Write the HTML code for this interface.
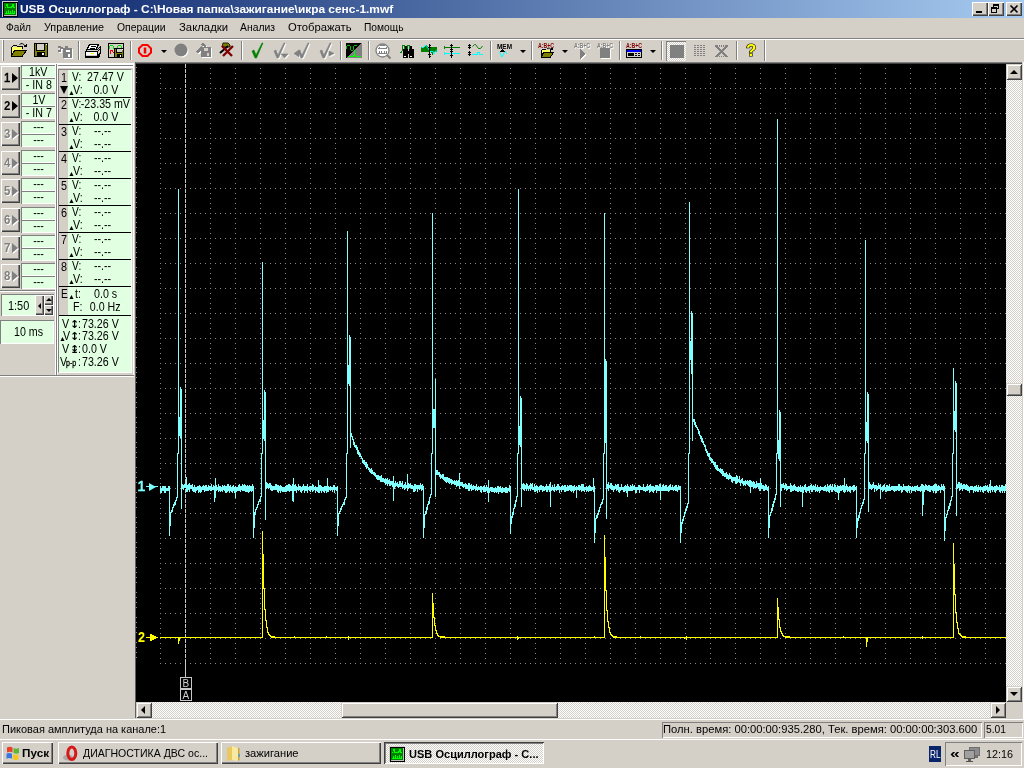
<!DOCTYPE html>
<html><head><meta charset="utf-8"><title>USB Осциллограф</title>
<style>
html,body{margin:0;padding:0}
body{width:1024px;height:768px;position:relative;overflow:hidden;background:#D4D0C8;font-family:"Liberation Sans","DejaVu Sans",sans-serif;font-size:11px;color:#000}
.a{position:absolute;box-sizing:border-box}
.t{position:absolute;white-space:nowrap;transform-origin:0 0}
#w{position:absolute;left:0;top:0;width:1024px;height:768px;will-change:transform}
svg{position:absolute;left:0;top:0;overflow:visible}
.chk{background-image:linear-gradient(45deg,#fff 25%,transparent 25%,transparent 75%,#fff 75%),linear-gradient(45deg,#fff 25%,transparent 25%,transparent 75%,#fff 75%);background-size:2px 2px;background-position:0 0,1px 1px;background-color:#D4D0C8}
</style></head><body><div id="w">

<div class="a" style="left:0px;top:0px;width:1024px;height:18px;background:linear-gradient(90deg,#0A246A 0%,#A6CAF0 100%);"></div>
<svg style="left:2px;top:1px" width="16" height="16" viewBox="0 0 16 16" shape-rendering="crispEdges"><rect x="0" y="0" width="16" height="16" fill="#D4D0C8"/><rect x="1" y="1" width="15" height="15" fill="#000"/><rect x="2" y="2" width="13" height="13" fill="#C0C0C0"/><rect x="2" y="2" width="12" height="12" fill="#008000"/><path d="M2 6h3v-1h-2zM3 5h1v-2h2v3h3v-1h1v-2h2v3h1v1h-2v-1h-1v1h-5v-1h-1v1h-1z" fill="#00FF00"/><path d="M2 13h11v-3h-1v2h-1v-3h-1v3h-1v-2h-1v2h-1v-3h-1v3h-1v-2h-1v2h-1z" fill="#00FF00"/></svg>
<span class="t" style="left:20px;top:3.67px;font-size:11.5px;line-height:11.5px;color:#fff;font-weight:bold;transform:scaleX(1.0353);">USB Осциллограф - C:\Новая папка\зажигание\икра сенс-1.mwf</span>
<div class="a" style="left:972px;top:2px;width:16px;height:14px;background:#D4D0C8;box-shadow:inset 1px 1px 0 #fff, inset -1px -1px 0 #404040, inset -2px -2px 0 #808080;"></div>
<div class="a" style="left:988px;top:2px;width:16px;height:14px;background:#D4D0C8;box-shadow:inset 1px 1px 0 #fff, inset -1px -1px 0 #404040, inset -2px -2px 0 #808080;"></div>
<div class="a" style="left:1006px;top:2px;width:16px;height:14px;background:#D4D0C8;box-shadow:inset 1px 1px 0 #fff, inset -1px -1px 0 #404040, inset -2px -2px 0 #808080;"></div>
<div class="a" style="left:976px;top:11px;width:6px;height:2px;background:#000;"></div>
<div class="a" style="left:993px;top:4px;width:6px;height:5px;border:1px solid #000;border-top:2px solid #000"></div>
<div class="a" style="left:991px;top:7px;width:6px;height:6px;background:#D4D0C8;border:1px solid #000;border-top:2px solid #000"></div>
<svg style="left:1006px;top:2px" width="16" height="14" viewBox="0 0 16 14"><path d="M4.5 3.5l7 7M11.5 3.5l-7 7" stroke="#000" stroke-width="1.6" fill="none"/></svg>
<div class="a" style="left:0px;top:18px;width:1024px;height:20px;background:#D4D0C8;"></div>
<span class="t" style="left:6px;top:21.67px;font-size:11.5px;line-height:11.5px;color:#000;transform:scaleX(0.8845);">Файл</span>
<span class="t" style="left:44px;top:21.67px;font-size:11.5px;line-height:11.5px;color:#000;transform:scaleX(0.9389);">Управление</span>
<span class="t" style="left:116.5px;top:21.67px;font-size:11.5px;line-height:11.5px;color:#000;transform:scaleX(0.9018);">Операции</span>
<span class="t" style="left:178.5px;top:21.67px;font-size:11.5px;line-height:11.5px;color:#000;transform:scaleX(0.9849);">Закладки</span>
<span class="t" style="left:240px;top:21.67px;font-size:11.5px;line-height:11.5px;color:#000;transform:scaleX(0.9021);">Анализ</span>
<span class="t" style="left:287.5px;top:21.67px;font-size:11.5px;line-height:11.5px;color:#000;transform:scaleX(0.9781);">Отображать</span>
<span class="t" style="left:363.5px;top:21.67px;font-size:11.5px;line-height:11.5px;color:#000;transform:scaleX(0.8895);">Помощь</span>
<div class="a" style="left:0px;top:38px;width:1024px;height:1px;background:#808080;"></div>
<div class="a" style="left:0px;top:39px;width:1024px;height:1px;background:#fff;"></div>
<div class="a" style="left:2px;top:40px;width:1px;height:21px;background:#fff;"></div>
<div class="a" style="left:3px;top:40px;width:1px;height:21px;background:#808080;"></div>
<div class="a" style="left:78px;top:41px;width:1px;height:19px;background:#808080;"></div><div class="a" style="left:79px;top:41px;width:1px;height:19px;background:#fff;"></div>
<div class="a" style="left:130px;top:41px;width:1px;height:19px;background:#808080;"></div><div class="a" style="left:131px;top:41px;width:1px;height:19px;background:#fff;"></div>
<div class="a" style="left:241px;top:41px;width:1px;height:19px;background:#808080;"></div><div class="a" style="left:242px;top:41px;width:1px;height:19px;background:#fff;"></div>
<div class="a" style="left:340px;top:41px;width:1px;height:19px;background:#808080;"></div><div class="a" style="left:341px;top:41px;width:1px;height:19px;background:#fff;"></div>
<div class="a" style="left:368px;top:41px;width:1px;height:19px;background:#808080;"></div><div class="a" style="left:369px;top:41px;width:1px;height:19px;background:#fff;"></div>
<div class="a" style="left:490px;top:41px;width:1px;height:19px;background:#808080;"></div><div class="a" style="left:491px;top:41px;width:1px;height:19px;background:#fff;"></div>
<div class="a" style="left:531px;top:41px;width:1px;height:19px;background:#808080;"></div><div class="a" style="left:532px;top:41px;width:1px;height:19px;background:#fff;"></div>
<div class="a" style="left:619px;top:41px;width:1px;height:19px;background:#808080;"></div><div class="a" style="left:620px;top:41px;width:1px;height:19px;background:#fff;"></div>
<div class="a" style="left:661px;top:41px;width:1px;height:19px;background:#808080;"></div><div class="a" style="left:662px;top:41px;width:1px;height:19px;background:#fff;"></div>
<div class="a" style="left:736px;top:41px;width:1px;height:19px;background:#808080;"></div><div class="a" style="left:737px;top:41px;width:1px;height:19px;background:#fff;"></div>
<div class="a" style="left:764px;top:40px;width:1px;height:21px;background:#808080;"></div>
<div class="a" style="left:765px;top:40px;width:1px;height:21px;background:#fff;"></div>
<div class="a" style="left:161px;top:50px;border-top:3px solid #000;border-left:3px solid transparent;border-right:3px solid transparent"></div>
<div class="a" style="left:520px;top:50px;border-top:3px solid #000;border-left:3px solid transparent;border-right:3px solid transparent"></div>
<div class="a" style="left:562px;top:50px;border-top:3px solid #000;border-left:3px solid transparent;border-right:3px solid transparent"></div>
<div class="a" style="left:650px;top:50px;border-top:3px solid #000;border-left:3px solid transparent;border-right:3px solid transparent"></div>
<div class="a chk" style="left:666px;top:41px;width:20px;height:20px;"></div><div class="a" style="left:666px;top:41px;width:20px;height:1px;background:#808080;"></div><div class="a" style="left:666px;top:41px;width:1px;height:20px;background:#808080;"></div><svg width="1024" height="64" viewBox="0 0 1024 64" shape-rendering="crispEdges"><g transform="translate(11 43)"><path d="M0.5 3.5h1l1-1h3l1 1h5v2.5M0.5 3.5v9.5" stroke="#000" fill="none"/><path d="M1 4h10v4H3l-2 4z" fill="#FFFF66"/><path d="M3.5 7.5h12l-4 5.5h-11z" fill="#808000" stroke="#000"/><path d="M8.5 1.5q3-2.5 5.5 1.5" stroke="#000" fill="none" shape-rendering="auto"/><path d="M12 4h4v-3z" fill="#000"/></g><g transform="translate(34 43)"><rect x="0" y="0" width="14" height="14" fill="#000"/><rect x="1" y="1" width="12" height="12" fill="#808000"/><rect x="3" y="1" width="8" height="6" fill="#D4D0C8"/><rect x="10" y="1" width="1" height="6" fill="#000"/><rect x="2" y="1" width="1" height="6" fill="#000"/><rect x="2" y="7" width="9" height="1" fill="#000"/><rect x="3" y="9" width="8" height="4" fill="#000"/><rect x="8" y="10" width="2" height="2" fill="#fff"/><rect x="12" y="1" width="1" height="1" fill="#fff"/></g><g transform="translate(58 46)"><g transform="translate(1 1)" fill="#fff"><rect x="5" y="2" width="9" height="10"/><path d="M0 0h3v1h2v2h-2v3h-3v-2h2v-2h-2z"/></g><g fill="#808080"><rect x="5" y="2" width="9" height="10"/><path d="M0 0h3v1h2v2h-2v3h-3v-2h2v-2h-2zM7 0h3v2h-3z"/></g><rect x="8" y="4" width="4" height="2" fill="#fff"/><rect x="10" y="8" width="2" height="3" fill="#fff"/></g><g transform="translate(85 44)"><path d="M4.5 0.5h9l-2.5 5h-9z" fill="#fff" stroke="#000"/><path d="M6 2.5h5M5 4h5" stroke="#000"/><path d="M0.5 7.5l2-2h10l3 -2.5v6l-3 3h-12z" fill="#D4D0C8" stroke="#000"/><rect x="1" y="8" width="11" height="3" fill="#fff"/><path d="M0.500 7.5h12v5.500h-12zM12.5 7.5l3-3" stroke="#000" fill="none"/><rect x="6" y="9" width="3" height="1" fill="#FFFF00"/><path d="M2 13.500h11l2-2" stroke="#000" fill="none"/></g><g transform="translate(108 43)"><rect x="0.500" y="0.500" width="15" height="14" fill="#D4D0C8" stroke="#000"/><path d="M1.500 5.500v-2l1-1h2l1 1v2M9.500 4.500v-1l1-1h2l1 1v2" stroke="#00E000" fill="none"/><path d="M1.500 10.500h1v-3h2l1 3" stroke="#FF0000" fill="none"/><g transform="translate(6 5)"><rect x="0" y="0" width="10" height="10" fill="#000"/><rect x="1" y="1" width="8" height="8" fill="#808000"/><rect x="3" y="1" width="5" height="3" fill="#D4D0C8"/><rect x="2" y="1" width="1" height="3" fill="#000"/><rect x="2" y="4" width="6" height="1" fill="#000"/><rect x="3" y="6" width="5" height="4" fill="#000"/><rect x="6" y="7" width="1" height="2" fill="#fff"/><rect x="8" y="1" width="1" height="1" fill="#fff"/></g></g><g transform="translate(138 44)"><path d="M4.500 1h5l3.500 3.500v4l-3.500 3.500h-5l-3.500-3.500v-4z" fill="none" stroke="#FF0000" stroke-width="2" shape-rendering="auto"/><rect x="5.750" y="3.500" width="2.500" height="6" fill="#FF0000" shape-rendering="auto"/></g><g transform="translate(174 43)"><circle cx="8" cy="8" r="6.500" fill="#fff" shape-rendering="auto"/><circle cx="7" cy="7" r="6.500" fill="#808080" shape-rendering="auto"/></g><g transform="translate(196 43)"><g fill="#fff" transform="translate(1 1)"><rect x="5" y="4" width="10" height="10"/><path d="M0 9l5-6 2 2-5 6zM4 1l3-1 4 3-2 1z"/></g><g fill="#808080"><rect x="5" y="4" width="10" height="10"/><path d="M0 9l5-6 2 2-5 6zM4 1l3-1 4 3-2 1z"/></g><rect x="8" y="5" width="4" height="3" fill="#D4D0C8"/><rect x="11" y="10" width="2" height="3" fill="#D4D0C8"/></g><g transform="translate(219 42)"><path d="M4 1h5l2 2v2h-8z" fill="#808000" stroke="#000" stroke-width="0.800" shape-rendering="auto"/><path d="M1 11l8-7" stroke="#000" stroke-width="2" shape-rendering="auto"/><path d="M3 4l10 10M14 4l-10 10" stroke="#800000" stroke-width="2.400" shape-rendering="auto"/></g><g transform="translate(251 43)"><g fill="#008000" stroke="#008000" stroke-width="0.6" shape-rendering="auto"><path d="M1 8l2-1 2 5 6-12h1l-6.500 15h-1.500z"/></g></g><g transform="translate(273 43)"><g transform="translate(1 1)" fill="#fff" stroke="#fff" stroke-width="0.6" shape-rendering="auto"><path d="M1 8l2-1 2 5 6-12h1l-6.500 15h-1.500z"/><path d="M8 11h7l-3.500 4z"/></g><g fill="#808080" stroke="#808080" stroke-width="0.6" shape-rendering="auto"><path d="M1 8l2-1 2 5 6-12h1l-6.500 15h-1.500z"/><path d="M8 11h7l-3.500 4z"/></g></g><g transform="translate(297 43)"><g transform="translate(1 1)" fill="#fff" stroke="#fff" stroke-width="0.6" shape-rendering="auto"><path d="M1 8l2-1 2 5 6-12h1l-6.500 15h-1.500z"/><path d="M-3 10.500l5-3.500v7z"/></g><g fill="#808080" stroke="#808080" stroke-width="0.6" shape-rendering="auto"><path d="M1 8l2-1 2 5 6-12h1l-6.500 15h-1.500z"/><path d="M-3 10.500l5-3.500v7z"/></g></g><g transform="translate(319 43)"><g transform="translate(1 1)" fill="#fff" stroke="#fff" stroke-width="0.6" shape-rendering="auto"><path d="M1 8l2-1 2 5 6-12h1l-6.500 15h-1.500z"/><path d="M10 8l5 2.500-5 2.500z"/></g><g fill="#808080" stroke="#808080" stroke-width="0.6" shape-rendering="auto"><path d="M1 8l2-1 2 5 6-12h1l-6.500 15h-1.500z"/><path d="M10 8l5 2.500-5 2.500z"/></g></g><g transform="translate(346 43)"><rect x="0" y="0" width="16" height="15" fill="#808080"/><path d="M0 0h16l-16 15z" fill="#000"/><path d="M0.500 5.500v-2l1-1h2l1 1v3l1 1h1l1-1v-3l1.500-1h2" stroke="#00C000" fill="none"/><path d="M2 13.500h5l1.500-1.500v-5M8.500 12l1.500 1.500h5" stroke="#00FF00" fill="none"/></g><g transform="translate(375 43)"><circle cx="7.500" cy="7.500" r="6.500" fill="#fff" stroke="#808080" stroke-width="1.300" shape-rendering="auto"/><path d="M3 5.500h9M4 4.500v-1M11 4.500v-1M3 10.500h9M4 10.500v-3M6.500 10.500v-3M9 10.500v-3M11.500 10.500v-3M5 2.500h5" stroke="#808080" fill="none"/><path d="M12 12l3.500 3.500" stroke="#808080" stroke-width="2" shape-rendering="auto"/></g><g transform="translate(399 43)"><path d="M0.500 9.500h2l1-3v-4h2v3l1.500 1h1v-4h2v3" stroke="#008000" fill="none"/><path d="M0 10h3v-2z" fill="#008000"/><rect x="4" y="6" width="5" height="9" fill="#000"/><rect x="10" y="6" width="5" height="9" fill="#000"/><rect x="6" y="3" width="2" height="4" fill="#000"/><rect x="11" y="3" width="2" height="4" fill="#000"/><rect x="8" y="8" width="3" height="3" fill="#000"/><rect x="5" y="13" width="2" height="1" fill="#fff"/><rect x="11" y="13" width="2" height="1" fill="#fff"/></g><g transform="translate(421 44)"><path d="M0 3h3l2-2 2 2h9v5h-3l-1.500 3-1.500-3h-10z" fill="#008000"/><path d="M0.500 3.500h2l2-2.500 2 2 2.500 4.500h3l1 2.500 1.500-3h2" stroke="#00FFFF" fill="none" shape-rendering="auto"/><path d="M8.500 0v14M7 3.500h3M7 10.500h3M7.500 1.500h2M7.500 12.500h2" stroke="#000" fill="none"/></g><g transform="translate(444 44)"><path d="M0 3.500h16" stroke="#008000"/><path d="M0 2v3l3-1.500z" fill="#008000"/><path d="M0 9.500h16" stroke="#00FFFF"/><path d="M0 8v3l3-1.500z" fill="#00FFFF"/><path d="M7.500 0v14M6 1.500h3M6 5.500h3M6 7.500h3M6 11.500h3" stroke="#000" fill="none"/></g><g transform="translate(468 43)"><path d="M1.500 1v5M1.500 8v5M0 2.500h3M0 4.500h3M0 9.500h3M0 11.500h3" stroke="#000" fill="none"/><path d="M4.500 3.500l2-2h1l3 4h2l2-2.500" stroke="#008000" fill="none" shape-rendering="auto"/><path d="M4 11.500h5v-2.500h2v2.500h4" stroke="#00FFFF" fill="none"/></g><g transform="translate(497 43)"><text x="0" y="5.500" font-family="Liberation Sans,sans-serif" font-size="6.500" font-weight="bold" fill="#000" textLength="15" lengthAdjust="spacingAndGlyphs">MEM</text><path d="M2.500 9l2.500 5 3-6 2 3" stroke="#00FFFF" fill="none" shape-rendering="auto"/><path d="M3 8.500h5l-2.500-2.500z" fill="#000"/></g><g transform="translate(538 43)"><text x="0" y="4.800" font-family="Liberation Sans,sans-serif" font-size="6.500" font-weight="bold" fill="#800000" textLength="16" lengthAdjust="spacingAndGlyphs">A:B+C</text><g transform="translate(3 5)"><path d="M0.500 1.500h4l1 1h4v2M0.500 1.500v7" stroke="#000" fill="none"/><path d="M1 2h8v3H2l-1 3z" fill="#FFFF66"/><path d="M2.500 4.500h10l-3 4.500h-9z" fill="#808000" stroke="#000"/><path d="M6 0.500q2.500-1.500 4 1" stroke="#000" fill="none" shape-rendering="auto"/><path d="M8.500 2h3v-2.500z" fill="#000"/></g></g><g transform="translate(574 43)"><text x="1" y="5.800" font-family="Liberation Sans,sans-serif" font-size="6.500" font-weight="bold" fill="#fff" textLength="16" lengthAdjust="spacingAndGlyphs">A:B+C</text><text x="0" y="4.800" font-family="Liberation Sans,sans-serif" font-size="6.500" font-weight="bold" fill="#808080" textLength="16" lengthAdjust="spacingAndGlyphs">A:B+C</text><path d="M7 7l6 5-6 5z" fill="#fff"/><path d="M6 6l6 5-6 5z" fill="#808080"/></g><g transform="translate(597 43)"><text x="1" y="5.800" font-family="Liberation Sans,sans-serif" font-size="6.500" font-weight="bold" fill="#fff" textLength="16" lengthAdjust="spacingAndGlyphs">A:B+C</text><text x="0" y="4.800" font-family="Liberation Sans,sans-serif" font-size="6.500" font-weight="bold" fill="#808080" textLength="16" lengthAdjust="spacingAndGlyphs">A:B+C</text><rect x="4" y="6" width="10" height="10" fill="#fff"/><rect x="3" y="5" width="10" height="10" fill="#808080"/></g><g transform="translate(626 43)"><text x="0" y="4.800" font-family="Liberation Sans,sans-serif" font-size="6.500" font-weight="bold" fill="#800000" textLength="16" lengthAdjust="spacingAndGlyphs">A:B+C</text><rect x="0.500" y="6.500" width="15" height="8" fill="#D4D0C8" stroke="#000"/><rect x="1" y="7" width="14" height="2" fill="#0000FF"/><rect x="2" y="10" width="6" height="3" fill="#000"/><path d="M9 10.500h2M12 10.500h2M9 12.500h2M12 12.500h2" stroke="#000"/></g><g transform="translate(670 45)"><rect x="0" y="0" width="14" height="13" fill="#808080"/></g><g transform="translate(694 45)"><path d="M0 0.5h11M0 2.5h11M0 4.5h11M0 6.5h11M0 8.5h11M0 10.5h11" stroke="#808080" stroke-dasharray="2 1"/></g><g transform="translate(715 45)"><path d="M0 0h13M0 1.500h13" stroke="#808080" stroke-dasharray="1 1"/><path d="M1 1l11 11M12 1l-11 11" stroke="#808080" stroke-width="2.500"/><path d="M0 11.500h13" stroke="#808080" stroke-dasharray="1 1"/></g><g transform="translate(746 43)"><text x="0" y="13" font-family="Liberation Sans,sans-serif" font-size="17" font-weight="bold" fill="#FFFF00" stroke="#000" stroke-width="1.200" paint-order="stroke" shape-rendering="auto">?</text></g></svg>
<div class="a" style="left:0px;top:63px;width:134px;height:2px;background:#fff;"></div>
<div class="a" style="left:133px;top:63px;width:1px;height:313px;background:#fff;"></div>
<div class="a" style="left:1px;top:66px;width:19px;height:24px;background:#D4D0C8;box-shadow:inset 1px 1px 0 #fff, inset -1px -1px 0 #404040, inset -2px -2px 0 #808080;"></div>
<span class="t" style="left:4px;top:72.34px;font-size:12px;line-height:12px;color:#000;transform:scaleX(0.95);-webkit-text-stroke:0.6px #000;">1</span>
<div class="a" style="left:12px;top:73px;border-left:6px solid #000;border-top:5px solid transparent;border-bottom:5px solid transparent"></div>
<div class="a" style="left:21px;top:65px;width:35px;height:13px;background:#E1FFE1;box-shadow:inset 1px 1px 0 #808080, inset -1px -1px 0 #fff;"></div>
<div class="a" style="left:21px;top:78px;width:35px;height:13px;background:#E1FFE1;box-shadow:inset 1px 1px 0 #808080, inset -1px -1px 0 #fff;"></div>
<span class="a" style="left:22px;top:65.00px;width:33px;text-align:center;white-space:nowrap;font-size:13px;line-height:13px;color:#000;"><span style="display:inline-block;transform:scaleX(0.82)">1kV</span></span>
<span class="a" style="left:22px;top:77.50px;width:33px;text-align:center;white-space:nowrap;font-size:13px;line-height:13px;color:#000;"><span style="display:inline-block;transform:scaleX(0.82)">- IN 8</span></span>
<div class="a" style="left:1px;top:94px;width:19px;height:24px;background:#D4D0C8;box-shadow:inset 1px 1px 0 #fff, inset -1px -1px 0 #404040, inset -2px -2px 0 #808080;"></div>
<span class="t" style="left:4px;top:100.34px;font-size:12px;line-height:12px;color:#000;font-weight:bold;transform:scaleX(0.95);">2</span>
<div class="a" style="left:12px;top:101px;border-left:6px solid #000;border-top:5px solid transparent;border-bottom:5px solid transparent"></div>
<div class="a" style="left:21px;top:93px;width:35px;height:13px;background:#E1FFE1;box-shadow:inset 1px 1px 0 #808080, inset -1px -1px 0 #fff;"></div>
<div class="a" style="left:21px;top:106px;width:35px;height:13px;background:#E1FFE1;box-shadow:inset 1px 1px 0 #808080, inset -1px -1px 0 #fff;"></div>
<span class="a" style="left:22px;top:93.00px;width:33px;text-align:center;white-space:nowrap;font-size:13px;line-height:13px;color:#000;"><span style="display:inline-block;transform:scaleX(0.82)">1V</span></span>
<span class="a" style="left:22px;top:105.50px;width:33px;text-align:center;white-space:nowrap;font-size:13px;line-height:13px;color:#000;"><span style="display:inline-block;transform:scaleX(0.82)">- IN 7</span></span>
<div class="a" style="left:1px;top:122px;width:19px;height:24px;background:#D4D0C8;box-shadow:inset 1px 1px 0 #fff, inset -1px -1px 0 #404040, inset -2px -2px 0 #808080;"></div>
<span class="t" style="left:5px;top:129.34px;font-size:12px;line-height:12px;color:#fff;font-weight:bold;transform:scaleX(0.95);">3</span>
<div class="a" style="left:13px;top:130px;border-left:6px solid #fff;border-top:5px solid transparent;border-bottom:5px solid transparent"></div>
<span class="t" style="left:4px;top:128.34px;font-size:12px;line-height:12px;color:#808080;font-weight:bold;transform:scaleX(0.95);">3</span>
<div class="a" style="left:12px;top:129px;border-left:6px solid #808080;border-top:5px solid transparent;border-bottom:5px solid transparent"></div>
<div class="a" style="left:21px;top:121px;width:35px;height:13px;background:#E1FFE1;box-shadow:inset 1px 1px 0 #808080, inset -1px -1px 0 #fff;"></div>
<div class="a" style="left:21px;top:134px;width:35px;height:13px;background:#E1FFE1;box-shadow:inset 1px 1px 0 #808080, inset -1px -1px 0 #fff;"></div>
<span class="a" style="left:22px;top:120.00px;width:33px;text-align:center;white-space:nowrap;font-size:13px;line-height:13px;color:#000;"><span style="display:inline-block;transform:scaleX(0.82)">---</span></span>
<span class="a" style="left:22px;top:132.50px;width:33px;text-align:center;white-space:nowrap;font-size:13px;line-height:13px;color:#000;"><span style="display:inline-block;transform:scaleX(0.82)">---</span></span>
<div class="a" style="left:1px;top:151px;width:19px;height:24px;background:#D4D0C8;box-shadow:inset 1px 1px 0 #fff, inset -1px -1px 0 #404040, inset -2px -2px 0 #808080;"></div>
<span class="t" style="left:5px;top:158.34px;font-size:12px;line-height:12px;color:#fff;font-weight:bold;transform:scaleX(0.95);">4</span>
<div class="a" style="left:13px;top:159px;border-left:6px solid #fff;border-top:5px solid transparent;border-bottom:5px solid transparent"></div>
<span class="t" style="left:4px;top:157.34px;font-size:12px;line-height:12px;color:#808080;font-weight:bold;transform:scaleX(0.95);">4</span>
<div class="a" style="left:12px;top:158px;border-left:6px solid #808080;border-top:5px solid transparent;border-bottom:5px solid transparent"></div>
<div class="a" style="left:21px;top:150px;width:35px;height:13px;background:#E1FFE1;box-shadow:inset 1px 1px 0 #808080, inset -1px -1px 0 #fff;"></div>
<div class="a" style="left:21px;top:163px;width:35px;height:13px;background:#E1FFE1;box-shadow:inset 1px 1px 0 #808080, inset -1px -1px 0 #fff;"></div>
<span class="a" style="left:22px;top:149.00px;width:33px;text-align:center;white-space:nowrap;font-size:13px;line-height:13px;color:#000;"><span style="display:inline-block;transform:scaleX(0.82)">---</span></span>
<span class="a" style="left:22px;top:161.50px;width:33px;text-align:center;white-space:nowrap;font-size:13px;line-height:13px;color:#000;"><span style="display:inline-block;transform:scaleX(0.82)">---</span></span>
<div class="a" style="left:1px;top:179px;width:19px;height:24px;background:#D4D0C8;box-shadow:inset 1px 1px 0 #fff, inset -1px -1px 0 #404040, inset -2px -2px 0 #808080;"></div>
<span class="t" style="left:5px;top:186.34px;font-size:12px;line-height:12px;color:#fff;font-weight:bold;transform:scaleX(0.95);">5</span>
<div class="a" style="left:13px;top:187px;border-left:6px solid #fff;border-top:5px solid transparent;border-bottom:5px solid transparent"></div>
<span class="t" style="left:4px;top:185.34px;font-size:12px;line-height:12px;color:#808080;font-weight:bold;transform:scaleX(0.95);">5</span>
<div class="a" style="left:12px;top:186px;border-left:6px solid #808080;border-top:5px solid transparent;border-bottom:5px solid transparent"></div>
<div class="a" style="left:21px;top:178px;width:35px;height:13px;background:#E1FFE1;box-shadow:inset 1px 1px 0 #808080, inset -1px -1px 0 #fff;"></div>
<div class="a" style="left:21px;top:191px;width:35px;height:13px;background:#E1FFE1;box-shadow:inset 1px 1px 0 #808080, inset -1px -1px 0 #fff;"></div>
<span class="a" style="left:22px;top:177.00px;width:33px;text-align:center;white-space:nowrap;font-size:13px;line-height:13px;color:#000;"><span style="display:inline-block;transform:scaleX(0.82)">---</span></span>
<span class="a" style="left:22px;top:189.50px;width:33px;text-align:center;white-space:nowrap;font-size:13px;line-height:13px;color:#000;"><span style="display:inline-block;transform:scaleX(0.82)">---</span></span>
<div class="a" style="left:1px;top:208px;width:19px;height:24px;background:#D4D0C8;box-shadow:inset 1px 1px 0 #fff, inset -1px -1px 0 #404040, inset -2px -2px 0 #808080;"></div>
<span class="t" style="left:5px;top:215.34px;font-size:12px;line-height:12px;color:#fff;font-weight:bold;transform:scaleX(0.95);">6</span>
<div class="a" style="left:13px;top:216px;border-left:6px solid #fff;border-top:5px solid transparent;border-bottom:5px solid transparent"></div>
<span class="t" style="left:4px;top:214.34px;font-size:12px;line-height:12px;color:#808080;font-weight:bold;transform:scaleX(0.95);">6</span>
<div class="a" style="left:12px;top:215px;border-left:6px solid #808080;border-top:5px solid transparent;border-bottom:5px solid transparent"></div>
<div class="a" style="left:21px;top:207px;width:35px;height:13px;background:#E1FFE1;box-shadow:inset 1px 1px 0 #808080, inset -1px -1px 0 #fff;"></div>
<div class="a" style="left:21px;top:220px;width:35px;height:13px;background:#E1FFE1;box-shadow:inset 1px 1px 0 #808080, inset -1px -1px 0 #fff;"></div>
<span class="a" style="left:22px;top:206.00px;width:33px;text-align:center;white-space:nowrap;font-size:13px;line-height:13px;color:#000;"><span style="display:inline-block;transform:scaleX(0.82)">---</span></span>
<span class="a" style="left:22px;top:218.50px;width:33px;text-align:center;white-space:nowrap;font-size:13px;line-height:13px;color:#000;"><span style="display:inline-block;transform:scaleX(0.82)">---</span></span>
<div class="a" style="left:1px;top:236px;width:19px;height:24px;background:#D4D0C8;box-shadow:inset 1px 1px 0 #fff, inset -1px -1px 0 #404040, inset -2px -2px 0 #808080;"></div>
<span class="t" style="left:5px;top:243.34px;font-size:12px;line-height:12px;color:#fff;font-weight:bold;transform:scaleX(0.95);">7</span>
<div class="a" style="left:13px;top:244px;border-left:6px solid #fff;border-top:5px solid transparent;border-bottom:5px solid transparent"></div>
<span class="t" style="left:4px;top:242.34px;font-size:12px;line-height:12px;color:#808080;font-weight:bold;transform:scaleX(0.95);">7</span>
<div class="a" style="left:12px;top:243px;border-left:6px solid #808080;border-top:5px solid transparent;border-bottom:5px solid transparent"></div>
<div class="a" style="left:21px;top:235px;width:35px;height:13px;background:#E1FFE1;box-shadow:inset 1px 1px 0 #808080, inset -1px -1px 0 #fff;"></div>
<div class="a" style="left:21px;top:248px;width:35px;height:13px;background:#E1FFE1;box-shadow:inset 1px 1px 0 #808080, inset -1px -1px 0 #fff;"></div>
<span class="a" style="left:22px;top:234.00px;width:33px;text-align:center;white-space:nowrap;font-size:13px;line-height:13px;color:#000;"><span style="display:inline-block;transform:scaleX(0.82)">---</span></span>
<span class="a" style="left:22px;top:246.50px;width:33px;text-align:center;white-space:nowrap;font-size:13px;line-height:13px;color:#000;"><span style="display:inline-block;transform:scaleX(0.82)">---</span></span>
<div class="a" style="left:1px;top:264px;width:19px;height:24px;background:#D4D0C8;box-shadow:inset 1px 1px 0 #fff, inset -1px -1px 0 #404040, inset -2px -2px 0 #808080;"></div>
<span class="t" style="left:5px;top:271.34px;font-size:12px;line-height:12px;color:#fff;font-weight:bold;transform:scaleX(0.95);">8</span>
<div class="a" style="left:13px;top:272px;border-left:6px solid #fff;border-top:5px solid transparent;border-bottom:5px solid transparent"></div>
<span class="t" style="left:4px;top:270.34px;font-size:12px;line-height:12px;color:#808080;font-weight:bold;transform:scaleX(0.95);">8</span>
<div class="a" style="left:12px;top:271px;border-left:6px solid #808080;border-top:5px solid transparent;border-bottom:5px solid transparent"></div>
<div class="a" style="left:21px;top:263px;width:35px;height:13px;background:#E1FFE1;box-shadow:inset 1px 1px 0 #808080, inset -1px -1px 0 #fff;"></div>
<div class="a" style="left:21px;top:276px;width:35px;height:13px;background:#E1FFE1;box-shadow:inset 1px 1px 0 #808080, inset -1px -1px 0 #fff;"></div>
<span class="a" style="left:22px;top:262.00px;width:33px;text-align:center;white-space:nowrap;font-size:13px;line-height:13px;color:#000;"><span style="display:inline-block;transform:scaleX(0.82)">---</span></span>
<span class="a" style="left:22px;top:274.50px;width:33px;text-align:center;white-space:nowrap;font-size:13px;line-height:13px;color:#000;"><span style="display:inline-block;transform:scaleX(0.82)">---</span></span>
<div class="a" style="left:55px;top:64px;width:1px;height:312px;background:#fff;"></div>
<div class="a" style="left:56px;top:64px;width:1px;height:312px;background:#808080;"></div>
<div class="a" style="left:57px;top:65px;width:76px;height:1px;background:#808080;"></div>
<div class="a" style="left:57px;top:66px;width:76px;height:2px;background:#fff;"></div>
<div class="a" style="left:57px;top:65px;width:1px;height:310px;background:#fff;"></div>
<div class="a" style="left:58px;top:69px;width:74px;height:304px;background:#E1FFE1;border-top:1px solid #808080;border-left:1px solid #808080;border-right:1px solid #fff;border-bottom:1px solid #fff;"></div>
<div class="a" style="left:59px;top:70px;width:9px;height:245px;background:#D4D0C8;"></div>
<div class="a" style="left:59px;top:97px;width:72px;height:1px;background:#000;"></div>
<div class="a" style="left:59px;top:124px;width:72px;height:1px;background:#000;"></div>
<div class="a" style="left:59px;top:151px;width:72px;height:1px;background:#000;"></div>
<div class="a" style="left:59px;top:178px;width:72px;height:1px;background:#000;"></div>
<div class="a" style="left:59px;top:205px;width:72px;height:1px;background:#000;"></div>
<div class="a" style="left:59px;top:232px;width:72px;height:1px;background:#000;"></div>
<div class="a" style="left:59px;top:259px;width:72px;height:1px;background:#000;"></div>
<div class="a" style="left:59px;top:286px;width:72px;height:1px;background:#000;"></div>
<div class="a" style="left:59px;top:315px;width:72px;height:1px;background:#000;"></div>
<span class="t" style="left:60.5px;top:72.44px;font-size:12px;line-height:12px;color:#000;transform:scaleX(0.9);">1</span>
<span class="t" style="left:71.8px;top:69.50px;font-size:13px;line-height:13px;color:#000;transform:scaleX(0.78);">V:</span>
<span class="t" style="left:73px;top:82.80px;font-size:13px;line-height:13px;color:#000;transform:scaleX(0.82);">V:</span>
<span class="t" style="left:68px;top:88.57px;font-size:7px;line-height:7px;color:#000;">▲</span>
<span class="a" style="left:24px;top:69.50px;width:100px;text-align:right;white-space:nowrap;font-size:13px;line-height:13px;color:#000;"><span style="display:inline-block;transform:scaleX(0.82);transform-origin:100% 0">27.47 V</span></span>
<span class="a" style="left:18px;top:82.80px;width:100px;text-align:right;white-space:nowrap;font-size:13px;line-height:13px;color:#000;"><span style="display:inline-block;transform:scaleX(0.82);transform-origin:100% 0">0.0 V</span></span>
<span class="t" style="left:60.5px;top:99.44px;font-size:12px;line-height:12px;color:#000;transform:scaleX(0.9);">2</span>
<span class="t" style="left:71.8px;top:96.50px;font-size:13px;line-height:13px;color:#000;transform:scaleX(0.78);">V:</span>
<span class="t" style="left:73px;top:109.80px;font-size:13px;line-height:13px;color:#000;transform:scaleX(0.82);">V:</span>
<span class="t" style="left:68px;top:115.57px;font-size:7px;line-height:7px;color:#000;">▲</span>
<span class="a" style="left:30px;top:96.50px;width:100px;text-align:right;white-space:nowrap;font-size:13px;line-height:13px;color:#000;"><span style="display:inline-block;transform:scaleX(0.82);transform-origin:100% 0">-23.35 mV</span></span>
<span class="a" style="left:18px;top:109.80px;width:100px;text-align:right;white-space:nowrap;font-size:13px;line-height:13px;color:#000;"><span style="display:inline-block;transform:scaleX(0.82);transform-origin:100% 0">0.0 V</span></span>
<span class="t" style="left:60.5px;top:126.44px;font-size:12px;line-height:12px;color:#000;transform:scaleX(0.9);">3</span>
<span class="t" style="left:71.8px;top:123.50px;font-size:13px;line-height:13px;color:#000;transform:scaleX(0.78);">V:</span>
<span class="t" style="left:73px;top:136.80px;font-size:13px;line-height:13px;color:#000;transform:scaleX(0.82);">V:</span>
<span class="t" style="left:68px;top:142.57px;font-size:7px;line-height:7px;color:#000;">▲</span>
<span class="a" style="left:92px;top:123.50px;width:20px;text-align:center;white-space:nowrap;font-size:13px;line-height:13px;color:#000;"><span style="display:inline-block;transform:scaleX(0.82)">--.--</span></span>
<span class="a" style="left:92px;top:136.80px;width:20px;text-align:center;white-space:nowrap;font-size:13px;line-height:13px;color:#000;"><span style="display:inline-block;transform:scaleX(0.82)">--.--</span></span>
<span class="t" style="left:60.5px;top:153.44px;font-size:12px;line-height:12px;color:#000;transform:scaleX(0.9);">4</span>
<span class="t" style="left:71.8px;top:150.50px;font-size:13px;line-height:13px;color:#000;transform:scaleX(0.78);">V:</span>
<span class="t" style="left:73px;top:163.80px;font-size:13px;line-height:13px;color:#000;transform:scaleX(0.82);">V:</span>
<span class="t" style="left:68px;top:169.57px;font-size:7px;line-height:7px;color:#000;">▲</span>
<span class="a" style="left:92px;top:150.50px;width:20px;text-align:center;white-space:nowrap;font-size:13px;line-height:13px;color:#000;"><span style="display:inline-block;transform:scaleX(0.82)">--.--</span></span>
<span class="a" style="left:92px;top:163.80px;width:20px;text-align:center;white-space:nowrap;font-size:13px;line-height:13px;color:#000;"><span style="display:inline-block;transform:scaleX(0.82)">--.--</span></span>
<span class="t" style="left:60.5px;top:180.44px;font-size:12px;line-height:12px;color:#000;transform:scaleX(0.9);">5</span>
<span class="t" style="left:71.8px;top:177.50px;font-size:13px;line-height:13px;color:#000;transform:scaleX(0.78);">V:</span>
<span class="t" style="left:73px;top:190.80px;font-size:13px;line-height:13px;color:#000;transform:scaleX(0.82);">V:</span>
<span class="t" style="left:68px;top:196.57px;font-size:7px;line-height:7px;color:#000;">▲</span>
<span class="a" style="left:92px;top:177.50px;width:20px;text-align:center;white-space:nowrap;font-size:13px;line-height:13px;color:#000;"><span style="display:inline-block;transform:scaleX(0.82)">--.--</span></span>
<span class="a" style="left:92px;top:190.80px;width:20px;text-align:center;white-space:nowrap;font-size:13px;line-height:13px;color:#000;"><span style="display:inline-block;transform:scaleX(0.82)">--.--</span></span>
<span class="t" style="left:60.5px;top:207.44px;font-size:12px;line-height:12px;color:#000;transform:scaleX(0.9);">6</span>
<span class="t" style="left:71.8px;top:204.50px;font-size:13px;line-height:13px;color:#000;transform:scaleX(0.78);">V:</span>
<span class="t" style="left:73px;top:217.80px;font-size:13px;line-height:13px;color:#000;transform:scaleX(0.82);">V:</span>
<span class="t" style="left:68px;top:223.57px;font-size:7px;line-height:7px;color:#000;">▲</span>
<span class="a" style="left:92px;top:204.50px;width:20px;text-align:center;white-space:nowrap;font-size:13px;line-height:13px;color:#000;"><span style="display:inline-block;transform:scaleX(0.82)">--.--</span></span>
<span class="a" style="left:92px;top:217.80px;width:20px;text-align:center;white-space:nowrap;font-size:13px;line-height:13px;color:#000;"><span style="display:inline-block;transform:scaleX(0.82)">--.--</span></span>
<span class="t" style="left:60.5px;top:234.44px;font-size:12px;line-height:12px;color:#000;transform:scaleX(0.9);">7</span>
<span class="t" style="left:71.8px;top:231.50px;font-size:13px;line-height:13px;color:#000;transform:scaleX(0.78);">V:</span>
<span class="t" style="left:73px;top:244.80px;font-size:13px;line-height:13px;color:#000;transform:scaleX(0.82);">V:</span>
<span class="t" style="left:68px;top:250.57px;font-size:7px;line-height:7px;color:#000;">▲</span>
<span class="a" style="left:92px;top:231.50px;width:20px;text-align:center;white-space:nowrap;font-size:13px;line-height:13px;color:#000;"><span style="display:inline-block;transform:scaleX(0.82)">--.--</span></span>
<span class="a" style="left:92px;top:244.80px;width:20px;text-align:center;white-space:nowrap;font-size:13px;line-height:13px;color:#000;"><span style="display:inline-block;transform:scaleX(0.82)">--.--</span></span>
<span class="t" style="left:60.5px;top:261.44px;font-size:12px;line-height:12px;color:#000;transform:scaleX(0.9);">8</span>
<span class="t" style="left:71.8px;top:258.50px;font-size:13px;line-height:13px;color:#000;transform:scaleX(0.78);">V:</span>
<span class="t" style="left:73px;top:271.80px;font-size:13px;line-height:13px;color:#000;transform:scaleX(0.82);">V:</span>
<span class="t" style="left:68px;top:277.57px;font-size:7px;line-height:7px;color:#000;">▲</span>
<span class="a" style="left:92px;top:258.50px;width:20px;text-align:center;white-space:nowrap;font-size:13px;line-height:13px;color:#000;"><span style="display:inline-block;transform:scaleX(0.82)">--.--</span></span>
<span class="a" style="left:92px;top:271.80px;width:20px;text-align:center;white-space:nowrap;font-size:13px;line-height:13px;color:#000;"><span style="display:inline-block;transform:scaleX(0.82)">--.--</span></span>
<div class="a" style="left:60px;top:86px;border-top:8px solid #000;border-left:4px solid transparent;border-right:4px solid transparent"></div>
<span class="t" style="left:60.5px;top:288.04px;font-size:12px;line-height:12px;color:#000;transform:scaleX(0.85);">E</span>
<span class="t" style="left:68px;top:292.57px;font-size:7px;line-height:7px;color:#000;">▲</span>
<span class="t" style="left:74.5px;top:286.80px;font-size:13px;line-height:13px;color:#000;transform:scaleX(0.82);">t:</span>
<span class="a" style="left:17px;top:286.80px;width:100px;text-align:right;white-space:nowrap;font-size:13px;line-height:13px;color:#000;"><span style="display:inline-block;transform:scaleX(0.82);transform-origin:100% 0">0.0 s</span></span>
<span class="t" style="left:72.5px;top:300.20px;font-size:13px;line-height:13px;color:#000;transform:scaleX(0.82);">F:</span>
<span class="a" style="left:21px;top:300.20px;width:100px;text-align:right;white-space:nowrap;font-size:13px;line-height:13px;color:#000;"><span style="display:inline-block;transform:scaleX(0.82);transform-origin:100% 0">0.0 Hz</span></span>
<span class="t" style="left:62px;top:317.00px;font-size:13px;line-height:13px;color:#000;transform:scaleX(0.82);">V</span>
<span class="t" style="left:70px;top:318.69px;font-size:11px;line-height:11px;color:#000;font-weight:bold;font-family:'DejaVu Sans',sans-serif;">↕</span>
<span class="t" style="left:78px;top:317.00px;font-size:13px;line-height:13px;color:#000;transform:scaleX(0.82);">:</span>
<span class="t" style="left:82px;top:317.00px;font-size:13px;line-height:13px;color:#000;transform:scaleX(0.82);">73.26 V</span>
<span class="t" style="left:59px;top:335.07px;font-size:7px;line-height:7px;color:#000;">▲</span>
<span class="t" style="left:63px;top:329.30px;font-size:13px;line-height:13px;color:#000;transform:scaleX(0.82);">V</span>
<span class="t" style="left:70px;top:330.99px;font-size:11px;line-height:11px;color:#000;font-weight:bold;font-family:'DejaVu Sans',sans-serif;">↕</span>
<span class="t" style="left:78px;top:329.30px;font-size:13px;line-height:13px;color:#000;transform:scaleX(0.82);">:</span>
<span class="t" style="left:82px;top:329.30px;font-size:13px;line-height:13px;color:#000;transform:scaleX(0.82);">73.26 V</span>
<span class="t" style="left:62px;top:342.20px;font-size:13px;line-height:13px;color:#000;transform:scaleX(0.82);">V</span>
<span class="t" style="left:70px;top:343.89px;font-size:11px;line-height:11px;color:#000;font-weight:bold;font-family:'DejaVu Sans',sans-serif;">↨</span>
<span class="t" style="left:78px;top:342.20px;font-size:13px;line-height:13px;color:#000;transform:scaleX(0.82);">:</span>
<span class="t" style="left:82px;top:342.20px;font-size:13px;line-height:13px;color:#000;transform:scaleX(0.82);">0.0 V</span>
<span class="t" style="left:60px;top:355.40px;font-size:13px;line-height:13px;color:#000;transform:scaleX(0.82);">V</span>
<span class="t" style="left:66px;top:359.18px;font-size:9px;line-height:9px;color:#000;transform:scaleX(0.78);-webkit-text-stroke:0.3px #000;">p-p</span>
<span class="t" style="left:78px;top:355.40px;font-size:13px;line-height:13px;color:#000;transform:scaleX(0.82);">:</span>
<span class="t" style="left:82px;top:355.40px;font-size:13px;line-height:13px;color:#000;transform:scaleX(0.82);">73.26 V</span>
<div class="a" style="left:0px;top:375px;width:134px;height:1px;background:#808080;"></div>
<div class="a" style="left:0px;top:376px;width:134px;height:1px;background:#fff;"></div>
<div class="a" style="left:0px;top:290px;width:55px;height:1px;background:#808080;"></div>
<div class="a" style="left:0px;top:291px;width:55px;height:1px;background:#fff;"></div>
<div class="a" style="left:1px;top:294px;width:53px;height:22px;background:#E1FFE1;box-shadow:inset 1px 1px 0 #808080, inset -1px -1px 0 #fff;"></div>
<span class="t" style="left:8px;top:298.60px;font-size:13px;line-height:13px;color:#000;transform:scaleX(0.84);">1:50</span>
<div class="a" style="left:35px;top:295px;width:9px;height:20px;background:#D4D0C8;box-shadow:inset 1px 1px 0 #fff, inset -1px -1px 0 #404040, inset -2px -2px 0 #808080;"></div>
<div class="a" style="left:38px;top:303px;border-right:3px solid #000;border-top:3px solid transparent;border-bottom:3px solid transparent"></div>
<div class="a" style="left:44px;top:295px;width:9px;height:10px;background:#D4D0C8;box-shadow:inset 1px 1px 0 #fff, inset -1px -1px 0 #404040, inset -2px -2px 0 #808080;"></div>
<div class="a" style="left:44px;top:305px;width:9px;height:10px;background:#D4D0C8;box-shadow:inset 1px 1px 0 #fff, inset -1px -1px 0 #404040, inset -2px -2px 0 #808080;"></div>
<div class="a" style="left:46px;top:298px;border-bottom:3px solid #000;border-left:3px solid transparent;border-right:3px solid transparent"></div>
<div class="a" style="left:46px;top:309px;border-top:3px solid #000;border-left:3px solid transparent;border-right:3px solid transparent"></div>
<div class="a" style="left:0px;top:320px;width:54px;height:24px;background:#E1FFE1;box-shadow:inset 1px 1px 0 #808080, inset -1px -1px 0 #fff;"></div>
<span class="t" style="left:13.5px;top:324.50px;font-size:13px;line-height:13px;color:#000;transform:scaleX(0.82);">10 ms</span>
<div class="a" style="left:135px;top:62px;width:887px;height:1px;background:#808080;"></div>
<div class="a" style="left:135px;top:63px;width:887px;height:1px;background:#404040;"></div>
<div class="a" style="left:134px;top:64px;width:1px;height:654px;background:#D4D0C8;"></div>
<div class="a" style="left:135px;top:62px;width:1px;height:656px;background:#606060;"></div>
<div class="a" style="left:136px;top:64px;width:870px;height:638px;background:#000;"></div>
<svg width="1024" height="768" viewBox="0 0 1024 768" shape-rendering="crispEdges">
<path d="M160.5 68V664M185.5 68V664M210.5 68V664M235.5 68V664M260.5 68V664M285.5 68V664M310.5 68V664M335.5 68V664M360.5 68V664M385.5 68V664M410.5 68V664M435.5 68V664M460.5 68V664M485.5 68V664M510.5 68V664M535.5 68V664M560.5 68V664M585.5 68V664M610.5 68V664M635.5 68V664M660.5 68V664M685.5 68V664M710.5 68V664M735.5 68V664M760.5 68V664M785.5 68V664M810.5 68V664M835.5 68V664M860.5 68V664M885.5 68V664M910.5 68V664M935.5 68V664M960.5 68V664M985.5 68V664" stroke="#8a8a8a" stroke-width="1" stroke-dasharray="1 4" fill="none"/>
<path d="M160 88.5H1006M160 113.5H1006M160 138.5H1006M160 163.5H1006M160 188.5H1006M160 213.5H1006M160 238.5H1006M160 263.5H1006M160 288.5H1006M160 313.5H1006M160 338.5H1006M160 363.5H1006M160 388.5H1006M160 413.5H1006M160 438.5H1006M160 463.5H1006M160 488.5H1006M160 513.5H1006M160 538.5H1006M160 563.5H1006M160 588.5H1006M160 613.5H1006M160 638.5H1006M160 663.5H1006" stroke="#8a8a8a" stroke-width="1" stroke-dasharray="1 4" fill="none"/>
<path d="M136 67.5h1M136 72.5h1M136 77.5h1M136 82.5h1M136 92.5h1M136 97.5h1M136 102.5h1M136 107.5h1M136 117.5h1M136 122.5h1M136 127.5h1M136 132.5h1M136 142.5h1M136 147.5h1M136 152.5h1M136 157.5h1M136 167.5h1M136 172.5h1M136 177.5h1M136 182.5h1M136 192.5h1M136 197.5h1M136 202.5h1M136 207.5h1M136 217.5h1M136 222.5h1M136 227.5h1M136 232.5h1M136 242.5h1M136 247.5h1M136 252.5h1M136 257.5h1M136 267.5h1M136 272.5h1M136 277.5h1M136 282.5h1M136 292.5h1M136 297.5h1M136 302.5h1M136 307.5h1M136 317.5h1M136 322.5h1M136 327.5h1M136 332.5h1M136 342.5h1M136 347.5h1M136 352.5h1M136 357.5h1M136 367.5h1M136 372.5h1M136 377.5h1M136 382.5h1M136 392.5h1M136 397.5h1M136 402.5h1M136 407.5h1M136 417.5h1M136 422.5h1M136 427.5h1M136 432.5h1M136 442.5h1M136 447.5h1M136 452.5h1M136 457.5h1M136 467.5h1M136 472.5h1M136 477.5h1M136 482.5h1M136 492.5h1M136 497.5h1M136 502.5h1M136 507.5h1M136 517.5h1M136 522.5h1M136 527.5h1M136 532.5h1M136 542.5h1M136 547.5h1M136 552.5h1M136 557.5h1M136 567.5h1M136 572.5h1M136 577.5h1M136 582.5h1M136 592.5h1M136 597.5h1M136 602.5h1M136 607.5h1M136 617.5h1M136 622.5h1M136 627.5h1M136 632.5h1M136 642.5h1M136 647.5h1M136 652.5h1M136 657.5h1" stroke="#8a8a8a" stroke-width="1" fill="none"/>
<path d="M185.5 64V663" stroke="#000" stroke-width="1" fill="none"/>
<path d="M185.5 64V663" stroke="#c8c8c8" stroke-width="1" stroke-dasharray="4 1" fill="none"/>
<path d="M185.5 663V677" stroke="#c8c8c8" stroke-width="1" fill="none"/>
<path d="M160.5 486V493M161.5 488V493M162.5 486V491M163.5 486V491M164.5 486V493M165.5 486V493M166.5 488V491M167.5 488V491M168.5 486V491M169.5 486V536M170.5 512V526M171.5 510V513M172.5 507V512M173.5 504V508M174.5 502V506M175.5 500V505M176.5 497V501M177.5 453V498M178.5 189V454M179.5 417V436M180.5 387V438M181.5 389V509M182.5 484V489M183.5 485V490M184.5 484V488M185.5 483V488M186.5 484V490M186.5 477V492M187.5 485V492M188.5 484V490M189.5 483V492M190.5 485V489M191.5 485V489M192.5 484V491M193.5 487V492M194.5 485V492M195.5 487V493M196.5 487V491M197.5 486V490M198.5 486V493M199.5 485V492M200.5 486V493M201.5 487V492M202.5 486V490M203.5 485V490M204.5 486V492M205.5 485V491M206.5 485V491M207.5 487V491M208.5 485V491M209.5 486V490M210.5 486V491M211.5 484V491M212.5 487V490M213.5 485V490M214.5 486V492M214.5 487V502M215.5 486V493M215.5 478V498M216.5 485V491M217.5 487V490M218.5 484V492M219.5 486V491M220.5 486V492M221.5 487V491M222.5 485V492M223.5 486V490M224.5 485V491M225.5 486V493M226.5 486V493M227.5 484V492M228.5 484V491M229.5 486V493M230.5 485V491M231.5 487V492M232.5 486V493M233.5 485V491M234.5 487V493M235.5 486V492M235.5 487V498M236.5 487V492M237.5 487V491M238.5 485V491M239.5 484V491M240.5 486V492M241.5 486V490M242.5 484V491M243.5 485V491M244.5 484V491M245.5 485V492M246.5 486V492M247.5 485V492M248.5 486V493M249.5 485V492M250.5 486V491M251.5 486V492M252.5 484V491M253.5 486V538M254.5 512V528M255.5 509V515M256.5 507V510M257.5 504V508M258.5 501V505M259.5 499V502M260.5 496V502M261.5 453V497M262.5 262V454M263.5 420V439M264.5 390V441M265.5 392V520M266.5 482V489M267.5 483V488M268.5 484V489M269.5 483V488M270.5 483V490M271.5 485V491M272.5 486V491M273.5 486V490M274.5 486V490M275.5 484V490M276.5 484V490M277.5 485V492M278.5 485V493M279.5 486V491M280.5 485V493M281.5 486V491M282.5 487V492M283.5 487V492M284.5 487V492M285.5 486V492M286.5 485V492M287.5 485V491M288.5 484V491M289.5 484V492M290.5 485V491M291.5 486V491M292.5 484V491M292.5 490V501M293.5 485V490M293.5 478V502M294.5 485V491M295.5 484V491M296.5 486V493M297.5 487V490M298.5 484V491M299.5 486V490M300.5 486V492M301.5 487V493M302.5 486V491M303.5 484V490M304.5 486V493M305.5 486V491M306.5 486V491M307.5 484V493M308.5 487V490M309.5 486V491M310.5 486V492M311.5 486V490M312.5 484V492M313.5 485V491M314.5 487V490M315.5 486V493M316.5 487V491M317.5 487V492M318.5 485V493M318.5 480V493M319.5 485V493M320.5 485V491M321.5 486V493M322.5 487V491M323.5 487V492M324.5 486V493M325.5 486V491M326.5 486V493M327.5 484V492M327.5 478V489M328.5 486V492M329.5 487V490M330.5 486V491M331.5 487V490M332.5 487V492M333.5 485V490M334.5 485V493M335.5 487V490M336.5 487V491M337.5 486V536M338.5 513V526M339.5 511V514M340.5 508V512M341.5 506V510M342.5 504V507M343.5 502V505M344.5 499V505M345.5 497V500M346.5 453V498M347.5 231V454M348.5 365V384M349.5 335V386M350.5 337V448M351.5 433V437M352.5 436V440M353.5 439V445M354.5 442V447M355.5 445V448M356.5 445V450M357.5 447V454M358.5 450V455M359.5 452V457M360.5 454V457M361.5 456V459M362.5 458V463M363.5 460V464M364.5 460V465M365.5 462V467M366.5 462V469M367.5 464V468M368.5 467V470M369.5 468V472M370.5 469V473M371.5 468V474M372.5 470V474M373.5 472V475M374.5 472V476M375.5 473V477M376.5 475V479M377.5 475V480M378.5 475V480M379.5 476V480M380.5 476V482M381.5 475V482M382.5 478V482M383.5 478V482M384.5 479V483M385.5 478V485M386.5 479V484M387.5 478V486M388.5 480V484M389.5 479V486M390.5 481V486M391.5 481V485M392.5 481V487M393.5 483V489M393.5 476V501M394.5 483V489M395.5 481V487M396.5 483V486M397.5 482V487M398.5 484V488M399.5 481V487M400.5 481V487M401.5 483V487M402.5 481V489M403.5 485V488M404.5 484V490M405.5 482V489M406.5 485V488M407.5 484V489M407.5 474V491M408.5 483V489M409.5 484V488M410.5 483V488M411.5 485V489M412.5 485V489M413.5 486V492M414.5 484V492M415.5 484V491M416.5 485V489M417.5 485V492M418.5 485V489M419.5 485V490M420.5 483V489M421.5 485V491M422.5 484V490M423.5 486V538M424.5 514V528M425.5 511V515M426.5 507V514M427.5 504V510M428.5 501V505M429.5 497V504M430.5 494V498M431.5 453V495M432.5 213V454M433.5 409V428M434.5 409V428M435.5 379V497M436.5 470V475M437.5 470V475M438.5 472V475M439.5 472V477M440.5 474V479M441.5 475V478M442.5 474V479M443.5 474V480M444.5 477V481M445.5 477V482M446.5 477V483M447.5 477V482M448.5 478V483M449.5 478V484M450.5 479V483M451.5 479V485M452.5 480V484M453.5 481V484M454.5 480V485M455.5 481V485M456.5 480V487M457.5 481V486M458.5 480V486M459.5 483V486M459.5 473V489M460.5 482V486M461.5 482V486M462.5 482V487M463.5 484V488M464.5 484V487M465.5 483V489M466.5 484V489M467.5 485V489M468.5 483V491M469.5 483V491M470.5 485V489M471.5 484V491M472.5 486V490M473.5 485V490M474.5 486V489M475.5 486V491M476.5 484V490M477.5 487V491M478.5 486V490M479.5 487V490M480.5 486V492M481.5 486V493M482.5 487V490M483.5 486V492M484.5 485V492M485.5 487V492M486.5 485V491M487.5 487V493M488.5 486V493M488.5 480V502M489.5 488V493M490.5 487V491M491.5 487V492M492.5 487V492M493.5 488V492M494.5 488V493M495.5 487V492M496.5 488V493M497.5 486V492M498.5 486V494M499.5 487V492M500.5 486V492M501.5 488V493M502.5 487V493M503.5 488V492M504.5 488V492M505.5 487V493M506.5 487V493M507.5 488V493M508.5 488V491M509.5 485V492M510.5 486V534M511.5 516V524M512.5 512V518M513.5 508V515M514.5 504V509M515.5 500V507M516.5 496V502M517.5 453V497M518.5 189V454M519.5 426V445M520.5 396V447M521.5 398V507M522.5 484V489M523.5 483V490M524.5 484V491M525.5 485V489M526.5 483V491M527.5 484V489M528.5 486V491M529.5 485V489M530.5 483V491M531.5 484V489M532.5 483V490M533.5 487V490M534.5 484V492M535.5 486V492M536.5 485V491M537.5 486V493M538.5 487V490M539.5 486V492M540.5 485V490M541.5 485V490M542.5 486V492M543.5 486V491M544.5 487V491M545.5 486V490M546.5 484V492M547.5 486V492M548.5 486V490M549.5 484V492M550.5 486V490M550.5 482V507M551.5 487V491M552.5 485V490M553.5 487V491M554.5 484V492M555.5 487V490M556.5 486V491M557.5 484V490M558.5 484V490M559.5 486V493M560.5 487V490M561.5 486V492M562.5 485V490M563.5 486V490M564.5 485V492M565.5 485V492M566.5 487V491M567.5 485V491M568.5 486V491M569.5 485V490M570.5 485V491M571.5 485V492M572.5 486V491M573.5 486V493M574.5 485V491M575.5 487V490M576.5 486V493M576.5 487V498M577.5 487V490M578.5 485V490M579.5 485V491M580.5 486V490M581.5 484V492M582.5 484V491M583.5 484V491M584.5 487V492M585.5 487V490M586.5 486V492M587.5 487V491M588.5 486V492M589.5 485V491M590.5 486V491M591.5 487V491M592.5 487V490M593.5 485V492M593.5 478V491M594.5 486V543M595.5 518V533M596.5 515V519M597.5 513V518M598.5 510V515M599.5 507V512M600.5 504V508M601.5 502V505M602.5 499V504M603.5 453V500M604.5 213V454M605.5 359V443M606.5 361V519M607.5 484V489M608.5 482V491M609.5 485V488M610.5 483V489M611.5 483V490M612.5 485V490M613.5 486V492M614.5 486V490M615.5 484V489M616.5 485V491M617.5 484V490M618.5 484V492M619.5 487V493M620.5 487V491M621.5 484V490M622.5 487V490M623.5 487V492M624.5 486V492M625.5 485V491M626.5 486V493M627.5 486V490M627.5 484V497M628.5 486V491M629.5 487V491M630.5 485V491M631.5 486V491M632.5 484V491M633.5 486V490M634.5 485V490M635.5 487V493M636.5 487V493M637.5 487V490M638.5 485V490M639.5 485V493M640.5 486V490M641.5 487V490M642.5 487V490M643.5 484V491M644.5 487V491M645.5 487V492M646.5 486V491M647.5 484V491M648.5 486V490M649.5 485V493M650.5 484V492M651.5 486V491M652.5 486V492M653.5 486V493M654.5 487V491M655.5 485V490M656.5 485V493M657.5 485V491M658.5 486V491M659.5 484V491M660.5 484V492M660.5 486V500M661.5 487V491M662.5 485V491M663.5 484V491M664.5 486V491M665.5 485V491M666.5 485V491M667.5 487V491M668.5 486V492M669.5 485V491M670.5 484V490M671.5 487V490M672.5 485V490M673.5 487V491M674.5 486V490M675.5 485V491M676.5 485V491M677.5 487V492M678.5 485V490M679.5 486V490M680.5 486V543M681.5 522V533M682.5 519V524M683.5 516V521M684.5 512V517M685.5 509V514M686.5 506V511M687.5 503V508M688.5 453V504M689.5 202V454M690.5 341V360M691.5 311V374M692.5 313V441M693.5 419V422M694.5 419V425M695.5 422V427M696.5 425V428M697.5 427V430M698.5 429V434M699.5 431V436M700.5 435V439M701.5 436V442M702.5 438V443M703.5 441V445M704.5 444V447M705.5 445V451M706.5 449V453M707.5 451V456M708.5 453V457M709.5 453V460M710.5 457V461M711.5 458V463M712.5 459V463M713.5 461V465M714.5 462V467M715.5 462V469M716.5 465V470M717.5 465V471M718.5 468V471M719.5 469V472M720.5 468V473M721.5 469V474M722.5 469V476M723.5 471V476M724.5 473V477M725.5 473V477M726.5 472V479M727.5 474V479M728.5 475V480M729.5 473V479M730.5 475V479M731.5 476V482M732.5 477V483M733.5 477V481M734.5 477V481M735.5 477V484M736.5 475V484M737.5 476V483M738.5 479V482M739.5 476V483M740.5 480V486M741.5 479V483M742.5 478V484M743.5 481V486M744.5 481V485M745.5 480V486M746.5 481V484M747.5 480V485M748.5 481V486M749.5 480V487M750.5 481V485M750.5 480V493M751.5 481V487M752.5 482V487M753.5 481V489M754.5 482V488M755.5 484V488M756.5 481V488M757.5 483V487M758.5 483V489M759.5 483V491M760.5 484V489M760.5 478V491M761.5 483V489M762.5 485V489M763.5 485V491M764.5 486V491M765.5 484V490M766.5 485V490M767.5 487V491M768.5 486V538M769.5 515V528M770.5 512V516M771.5 508V513M772.5 504V511M773.5 501V507M774.5 498V503M775.5 494V500M776.5 453V495M777.5 119V454M778.5 440V459M779.5 410V461M780.5 412V507M781.5 484V491M782.5 484V488M783.5 483V488M784.5 485V490M785.5 483V489M786.5 484V491M787.5 486V490M788.5 486V489M789.5 486V489M790.5 483V492M791.5 485V492M792.5 486V491M793.5 485V491M794.5 484V490M795.5 486V491M796.5 487V491M797.5 487V492M798.5 486V492M799.5 487V491M800.5 485V492M801.5 487V492M802.5 486V492M802.5 486V507M803.5 487V493M804.5 485V490M805.5 484V492M806.5 487V493M807.5 487V491M808.5 486V491M809.5 486V493M810.5 485V490M811.5 484V492M812.5 486V492M813.5 485V490M814.5 486V490M815.5 484V492M816.5 487V491M817.5 485V492M818.5 487V491M819.5 487V493M820.5 486V491M821.5 487V490M822.5 487V490M823.5 487V491M824.5 486V491M825.5 485V491M826.5 487V492M827.5 484V491M828.5 486V492M829.5 485V493M830.5 484V490M831.5 486V492M832.5 484V492M833.5 487V490M834.5 484V491M835.5 485V492M836.5 487V492M837.5 485V493M838.5 486V491M838.5 486V500M839.5 486V493M840.5 485V491M841.5 486V491M842.5 485V490M843.5 485V492M844.5 486V491M844.5 478V493M845.5 486V492M846.5 484V490M847.5 486V492M848.5 487V491M849.5 486V492M850.5 486V493M851.5 487V490M852.5 486V490M853.5 485V492M854.5 485V491M855.5 487V490M856.5 486V538M857.5 518V528M858.5 515V521M859.5 512V518M860.5 508V513M861.5 505V509M862.5 502V506M863.5 499V504M864.5 453V500M865.5 240V454M866.5 422V441M867.5 392V443M868.5 394V512M869.5 482V489M870.5 484V489M871.5 485V490M872.5 484V489M873.5 482V488M874.5 485V492M875.5 485V489M876.5 485V491M877.5 486V490M878.5 483V489M879.5 485V489M880.5 484V491M880.5 486V499M881.5 487V490M882.5 486V492M883.5 485V491M884.5 484V490M885.5 487V492M886.5 485V492M887.5 485V491M888.5 486V491M889.5 484V491M890.5 487V491M891.5 486V490M892.5 486V490M893.5 486V491M894.5 486V492M895.5 486V491M896.5 486V491M897.5 486V490M898.5 484V491M899.5 484V491M900.5 486V490M901.5 486V493M902.5 487V492M903.5 484V490M904.5 486V490M905.5 486V491M906.5 486V492M907.5 486V493M908.5 485V491M909.5 486V493M910.5 486V490M911.5 487V493M912.5 486V491M913.5 487V491M914.5 486V491M915.5 486V492M916.5 486V490M917.5 485V491M918.5 487V491M919.5 487V491M920.5 486V492M921.5 484V491M922.5 487V493M922.5 484V516M923.5 485V493M923.5 486V505M924.5 486V492M925.5 484V490M926.5 485V490M927.5 486V491M928.5 485V491M929.5 485V492M930.5 486V492M931.5 486V490M932.5 486V491M933.5 485V493M934.5 484V491M935.5 484V493M936.5 484V493M937.5 486V491M938.5 485V491M939.5 486V490M940.5 487V493M941.5 484V490M942.5 486V490M943.5 484V491M944.5 486V541M945.5 517V531M946.5 514V518M947.5 510V515M948.5 506V511M949.5 503V509M950.5 500V506M951.5 496V501M952.5 453V497M953.5 368V454M954.5 411V430M955.5 381V432M956.5 383V516M957.5 484V489M958.5 482V488M959.5 482V491M960.5 484V490M961.5 483V489M962.5 485V491M963.5 484V489M964.5 484V489M965.5 485V490M966.5 484V490M967.5 485V491M968.5 486V491M969.5 487V493M970.5 486V490M971.5 486V490M972.5 486V490M973.5 487V493M974.5 486V491M975.5 486V492M976.5 485V491M977.5 487V492M978.5 485V492M979.5 487V490M980.5 486V492M981.5 487V490M982.5 487V492M983.5 486V493M984.5 486V491M985.5 485V491M986.5 486V490M987.5 485V492M988.5 487V493M989.5 484V491M990.5 484V490M990.5 480V493M991.5 486V490M992.5 486V492M993.5 487V490M994.5 486V492M995.5 486V493M996.5 485V491M997.5 486V490M998.5 487V490M999.5 485V492M1000.5 487V493M1001.5 485V491M1002.5 485V493M1003.5 486V491M1004.5 486V493M1005.5 484V491" stroke="#80FFFF" stroke-width="1" fill="none"/>
<path d="M160.5 637V638M161.5 637V638M162.5 637V638M163.5 637V638M164.5 637V638M165.5 637V638M166.5 637V638M167.5 637V638M168.5 637V638M169.5 637V638M170.5 637V638M171.5 637V638M172.5 637V638M173.5 637V638M174.5 637V638M175.5 637V638M176.5 637V638M177.5 637V638M178.5 637V644M179.5 637V641M180.5 637V638M181.5 637V638M182.5 637V638M183.5 637V638M184.5 637V638M185.5 637V638M186.5 637V638M187.5 637V638M188.5 637V638M189.5 637V638M190.5 637V638M191.5 637V638M192.5 637V638M193.5 637V638M194.5 637V638M195.5 637V638M196.5 637V638M197.5 637V638M198.5 637V638M199.5 637V638M200.5 637V638M201.5 637V638M202.5 637V638M203.5 637V638M204.5 637V638M205.5 637V638M206.5 637V638M207.5 637V638M208.5 637V638M209.5 637V638M210.5 637V638M211.5 637V638M212.5 637V638M213.5 637V638M214.5 637V638M215.5 637V638M216.5 637V638M217.5 637V638M218.5 637V638M219.5 637V638M220.5 637V638M221.5 637V638M222.5 637V638M223.5 637V638M224.5 637V638M225.5 637V638M226.5 637V638M227.5 637V638M228.5 637V638M229.5 637V638M230.5 637V638M231.5 637V638M232.5 637V638M233.5 637V638M234.5 637V638M235.5 637V638M236.5 637V638M237.5 637V638M238.5 637V638M239.5 637V638M240.5 637V638M241.5 637V638M242.5 637V638M243.5 637V638M244.5 637V638M245.5 637V638M246.5 637V638M247.5 637V638M248.5 637V638M249.5 637V638M250.5 637V638M251.5 637V638M252.5 637V638M253.5 637V638M254.5 637V638M255.5 637V638M256.5 637V638M257.5 637V638M258.5 637V638M259.5 637V638M260.5 637V638M261.5 637V638M262.5 531V638M263.5 554V589M264.5 588V610M265.5 609V621M266.5 620V628M267.5 627V633M268.5 632V635M269.5 634V636M270.5 635V637M271.5 636V638M272.5 636V638M273.5 636V638M274.5 636V638M275.5 637V638M276.5 637V638M277.5 637V638M278.5 637V638M279.5 637V638M280.5 637V638M281.5 637V638M282.5 637V638M283.5 637V638M284.5 637V638M285.5 637V638M286.5 637V638M287.5 637V638M288.5 637V638M289.5 637V638M290.5 637V638M291.5 637V638M292.5 637V638M293.5 637V638M294.5 636V638M295.5 637V638M296.5 637V638M297.5 637V638M298.5 637V638M299.5 637V638M300.5 637V638M301.5 637V638M302.5 637V638M303.5 637V638M304.5 637V638M305.5 637V638M306.5 637V638M307.5 637V638M308.5 637V638M309.5 637V638M310.5 637V638M311.5 637V638M312.5 637V638M313.5 637V638M314.5 637V638M315.5 637V638M316.5 637V638M317.5 637V638M318.5 637V638M319.5 637V638M320.5 637V638M321.5 637V638M322.5 637V638M323.5 637V638M324.5 637V638M325.5 637V638M326.5 636V638M327.5 637V638M328.5 637V638M329.5 637V638M330.5 637V638M331.5 637V638M332.5 637V638M333.5 637V638M334.5 637V638M335.5 637V638M336.5 637V638M337.5 637V638M338.5 637V638M339.5 637V638M340.5 637V638M341.5 637V638M342.5 637V638M343.5 637V638M344.5 637V638M345.5 637V638M346.5 637V638M347.5 637V638M348.5 636V640M349.5 637V638M350.5 637V638M351.5 637V638M352.5 637V638M353.5 637V638M354.5 637V638M355.5 637V638M356.5 637V638M357.5 637V638M358.5 637V638M359.5 637V638M360.5 637V638M361.5 637V638M362.5 637V638M363.5 637V638M364.5 637V638M365.5 637V638M366.5 637V638M367.5 637V638M368.5 637V638M369.5 637V638M370.5 637V638M371.5 637V638M372.5 637V638M373.5 637V638M374.5 637V638M375.5 637V638M376.5 637V638M377.5 637V638M378.5 637V638M379.5 637V638M380.5 637V638M381.5 637V638M382.5 637V638M383.5 637V638M384.5 637V638M385.5 637V638M386.5 637V638M387.5 637V638M388.5 637V638M389.5 637V638M390.5 637V638M391.5 637V638M392.5 637V638M393.5 637V638M394.5 637V638M395.5 637V638M396.5 637V638M397.5 637V638M398.5 637V638M399.5 637V638M400.5 637V638M401.5 637V638M402.5 637V638M403.5 637V638M404.5 637V638M405.5 637V638M406.5 637V638M407.5 637V638M408.5 637V638M409.5 637V638M410.5 637V638M411.5 637V638M412.5 637V638M413.5 637V638M414.5 637V638M415.5 637V638M416.5 637V638M417.5 637V638M418.5 637V638M419.5 637V638M420.5 637V638M421.5 637V638M422.5 637V638M423.5 637V638M424.5 637V638M425.5 637V638M426.5 637V638M427.5 637V638M428.5 637V638M429.5 637V638M430.5 637V638M431.5 637V638M432.5 593V638M433.5 603V618M434.5 617V626M435.5 625V631M436.5 630V634M437.5 633V636M438.5 635V637M439.5 636V637M440.5 636V638M441.5 636V638M442.5 636V638M443.5 636V638M444.5 636V638M445.5 637V638M446.5 637V638M447.5 637V638M448.5 637V638M449.5 637V638M450.5 637V638M451.5 637V638M452.5 637V638M453.5 637V638M454.5 637V638M455.5 637V638M456.5 637V638M457.5 637V638M458.5 637V638M459.5 637V638M460.5 637V638M461.5 637V638M462.5 637V638M463.5 637V638M464.5 637V638M465.5 637V638M466.5 637V638M467.5 637V638M468.5 637V638M469.5 637V638M470.5 637V638M471.5 637V638M472.5 637V638M473.5 637V638M474.5 637V638M475.5 637V638M476.5 637V638M477.5 637V638M478.5 637V638M479.5 637V638M480.5 637V638M481.5 637V638M482.5 637V638M483.5 637V638M484.5 637V638M485.5 637V638M486.5 637V638M487.5 637V638M488.5 637V638M489.5 637V638M490.5 637V638M491.5 637V638M492.5 637V638M493.5 637V638M494.5 637V638M495.5 637V638M496.5 637V638M497.5 637V638M498.5 637V638M499.5 637V638M500.5 637V638M501.5 637V638M502.5 637V638M503.5 637V638M504.5 637V638M505.5 637V638M506.5 637V638M507.5 637V638M508.5 637V638M509.5 637V638M510.5 637V638M511.5 637V638M512.5 637V638M513.5 637V638M514.5 637V638M515.5 637V638M516.5 637V638M517.5 636V640M518.5 637V639M519.5 637V638M520.5 637V638M521.5 637V638M522.5 637V638M523.5 637V638M524.5 637V638M525.5 637V638M526.5 637V638M527.5 637V638M528.5 637V638M529.5 637V638M530.5 637V638M531.5 637V638M532.5 637V638M533.5 637V638M534.5 637V638M535.5 637V638M536.5 637V638M537.5 637V638M538.5 637V638M539.5 637V638M540.5 637V638M541.5 637V638M542.5 637V638M543.5 637V638M544.5 637V638M545.5 637V638M546.5 637V638M547.5 637V638M548.5 637V638M549.5 637V638M550.5 637V638M551.5 637V638M552.5 637V638M553.5 637V638M554.5 637V638M555.5 637V638M556.5 637V638M557.5 637V638M558.5 637V638M559.5 637V638M560.5 637V638M561.5 637V638M562.5 637V638M563.5 637V638M564.5 637V638M565.5 637V638M566.5 637V638M567.5 637V638M568.5 637V638M569.5 637V638M570.5 637V638M571.5 637V638M572.5 637V638M573.5 637V638M574.5 637V638M575.5 637V638M576.5 637V638M577.5 637V638M578.5 637V638M579.5 637V638M580.5 637V638M581.5 637V638M582.5 637V638M583.5 637V638M584.5 637V638M585.5 637V638M586.5 637V638M587.5 637V638M588.5 637V638M589.5 637V638M590.5 637V638M591.5 637V638M592.5 637V638M593.5 637V638M594.5 636V638M595.5 637V638M596.5 637V638M597.5 637V638M598.5 637V638M599.5 637V638M600.5 637V638M601.5 637V638M602.5 637V638M603.5 637V638M604.5 535V638M605.5 557V591M606.5 590V611M607.5 610V622M608.5 621V628M609.5 627V633M610.5 632V635M611.5 634V636M612.5 635V637M613.5 636V638M614.5 636V638M615.5 636V638M616.5 636V638M617.5 637V638M618.5 637V638M619.5 637V638M620.5 637V638M621.5 637V638M622.5 637V638M623.5 637V638M624.5 637V638M625.5 637V638M626.5 637V638M627.5 637V638M628.5 637V638M629.5 637V638M630.5 637V638M631.5 637V638M632.5 637V638M633.5 637V638M634.5 637V638M635.5 637V638M636.5 637V638M637.5 637V638M638.5 637V638M639.5 637V638M640.5 636V638M641.5 637V638M642.5 637V638M643.5 637V638M644.5 637V638M645.5 637V638M646.5 637V638M647.5 637V638M648.5 637V638M649.5 637V638M650.5 637V638M651.5 637V638M652.5 637V638M653.5 637V638M654.5 637V638M655.5 637V638M656.5 637V638M657.5 637V638M658.5 637V638M659.5 637V638M660.5 637V638M661.5 637V638M662.5 637V638M663.5 637V638M664.5 637V638M665.5 637V638M666.5 637V638M667.5 637V638M668.5 637V638M669.5 637V638M670.5 637V638M671.5 637V638M672.5 637V638M673.5 637V638M674.5 637V638M675.5 637V638M676.5 637V638M677.5 637V638M678.5 637V638M679.5 637V638M680.5 637V638M681.5 637V638M682.5 637V638M683.5 637V638M684.5 637V639M685.5 637V638M686.5 636V640M687.5 637V638M688.5 637V638M689.5 637V638M690.5 637V638M691.5 637V638M692.5 637V638M693.5 637V638M694.5 637V638M695.5 637V638M696.5 637V638M697.5 637V638M698.5 637V638M699.5 637V638M700.5 637V638M701.5 637V638M702.5 637V638M703.5 637V638M704.5 637V638M705.5 637V638M706.5 637V638M707.5 637V638M708.5 637V638M709.5 637V638M710.5 637V638M711.5 637V638M712.5 637V638M713.5 637V638M714.5 637V638M715.5 637V638M716.5 637V638M717.5 637V638M718.5 637V638M719.5 637V638M720.5 637V638M721.5 637V638M722.5 637V638M723.5 637V638M724.5 637V638M725.5 637V638M726.5 637V638M727.5 637V638M728.5 637V638M729.5 637V638M730.5 637V638M731.5 637V638M732.5 637V638M733.5 637V638M734.5 637V638M735.5 637V638M736.5 637V638M737.5 637V638M738.5 637V638M739.5 637V638M740.5 637V638M741.5 637V638M742.5 637V638M743.5 637V638M744.5 637V638M745.5 637V638M746.5 637V638M747.5 637V638M748.5 637V638M749.5 637V638M750.5 637V638M751.5 637V638M752.5 637V638M753.5 637V638M754.5 637V638M755.5 637V638M756.5 637V638M757.5 637V638M758.5 637V638M759.5 637V638M760.5 637V638M761.5 637V638M762.5 637V638M763.5 637V638M764.5 637V638M765.5 637V638M766.5 637V638M767.5 637V638M768.5 637V638M769.5 637V638M770.5 637V638M771.5 637V638M772.5 637V638M773.5 637V638M774.5 637V638M775.5 637V638M776.5 637V638M777.5 598V638M778.5 607V620M779.5 619V628M780.5 627V632M781.5 631V634M782.5 633V636M783.5 635V637M784.5 636V637M785.5 636V638M786.5 636V638M787.5 636V638M788.5 636V638M789.5 636V638M790.5 637V638M791.5 637V638M792.5 637V638M793.5 637V638M794.5 637V638M795.5 637V638M796.5 637V638M797.5 637V638M798.5 637V638M799.5 637V638M800.5 637V638M801.5 637V638M802.5 637V638M803.5 637V638M804.5 637V638M805.5 637V638M806.5 637V638M807.5 637V638M808.5 637V638M809.5 637V638M810.5 637V638M811.5 637V638M812.5 637V638M813.5 637V638M814.5 637V638M815.5 637V638M816.5 637V638M817.5 637V638M818.5 637V638M819.5 637V638M820.5 637V638M821.5 637V638M822.5 637V638M823.5 637V638M824.5 637V638M825.5 637V638M826.5 637V638M827.5 637V638M828.5 637V638M829.5 637V638M830.5 637V638M831.5 637V638M832.5 637V638M833.5 637V638M834.5 637V638M835.5 637V638M836.5 637V638M837.5 637V638M838.5 637V638M839.5 637V638M840.5 637V638M841.5 637V638M842.5 637V638M843.5 636V638M844.5 637V638M845.5 637V638M846.5 637V638M847.5 637V638M848.5 637V638M849.5 637V638M850.5 637V638M851.5 637V638M852.5 637V638M853.5 637V638M854.5 637V638M855.5 637V638M856.5 637V638M857.5 637V638M858.5 637V638M859.5 637V638M860.5 637V638M861.5 637V638M862.5 637V638M863.5 637V638M864.5 637V638M865.5 637V638M866.5 637V647M867.5 637V642M868.5 637V638M869.5 637V638M870.5 637V638M871.5 637V638M872.5 637V638M873.5 637V638M874.5 637V638M875.5 637V638M876.5 637V638M877.5 637V638M878.5 637V638M879.5 637V638M880.5 637V638M881.5 637V638M882.5 637V638M883.5 637V638M884.5 637V638M885.5 637V638M886.5 637V638M887.5 637V638M888.5 637V638M889.5 637V638M890.5 637V638M891.5 637V638M892.5 637V638M893.5 637V638M894.5 637V638M895.5 637V638M896.5 637V638M897.5 637V638M898.5 637V638M899.5 637V638M900.5 637V638M901.5 637V638M902.5 637V638M903.5 637V638M904.5 637V638M905.5 637V638M906.5 637V638M907.5 637V638M908.5 637V638M909.5 637V638M910.5 637V638M911.5 637V638M912.5 637V638M913.5 637V638M914.5 637V638M915.5 637V638M916.5 637V638M917.5 637V638M918.5 637V638M919.5 637V638M920.5 637V638M921.5 637V638M922.5 636V639M923.5 637V638M924.5 637V638M925.5 637V638M926.5 637V638M927.5 637V638M928.5 637V638M929.5 637V638M930.5 637V638M931.5 637V638M932.5 637V638M933.5 637V638M934.5 637V638M935.5 637V638M936.5 637V638M937.5 637V638M938.5 637V638M939.5 637V638M940.5 637V638M941.5 637V638M942.5 637V638M943.5 637V638M944.5 637V638M945.5 637V638M946.5 637V638M947.5 637V638M948.5 637V638M949.5 637V638M950.5 637V638M951.5 637V638M952.5 637V638M953.5 543V638M954.5 564V595M955.5 594V613M956.5 612V623M957.5 622V629M958.5 628V634M959.5 633V635M960.5 634V636M961.5 635V637M962.5 636V638M963.5 636V638M964.5 636V638M965.5 636V638M966.5 637V638M967.5 637V638M968.5 637V638M969.5 637V638M970.5 637V638M971.5 637V638M972.5 637V638M973.5 637V638M974.5 637V638M975.5 637V638M976.5 637V638M977.5 637V638M978.5 637V638M979.5 637V638M980.5 637V638M981.5 637V638M982.5 637V638M983.5 637V638M984.5 637V638M985.5 637V638M986.5 637V638M987.5 637V638M988.5 637V638M989.5 637V638M990.5 637V638M991.5 637V638M992.5 637V638M993.5 637V638M994.5 637V638M995.5 637V638M996.5 637V638M997.5 637V638M998.5 637V638M999.5 637V638M1000.5 637V638M1001.5 637V638M1002.5 637V638M1003.5 637V638M1004.5 637V638M1005.5 637V638" stroke="#FFFF00" stroke-width="1" fill="none"/>
<path d="M146 486.5h12" stroke="#80FFFF" fill="none" stroke-width="1"/><path d="M149 483v8l7-4z" fill="#80FFFF" shape-rendering="auto"/>
<path d="M146 637.5h4M150 634v7l7-3.5z" stroke="#FFFF00" fill="#FFFF00" stroke-width="1"/>
<rect x="180.5" y="677.5" width="11" height="11" rx="1" fill="#000" stroke="#c8c8c8"/>
<rect x="180.5" y="689.5" width="11" height="11" rx="1" fill="#000" stroke="#c8c8c8"/>
</svg>
<span class="t" style="left:137.5px;top:479.45px;font-size:14px;line-height:14px;color:#80FFFF;-webkit-text-stroke:0.7px #80FFFF;">1</span>
<span class="t" style="left:138px;top:630.45px;font-size:14px;line-height:14px;color:#FFFF00;font-weight:bold;transform:scaleX(0.9);">2</span>
<span class="t" style="left:182.5px;top:678.83px;font-size:10px;line-height:10px;color:#d0d0d0;">B</span>
<span class="t" style="left:182.5px;top:690.83px;font-size:10px;line-height:10px;color:#d0d0d0;">A</span>
<div class="a chk" style="left:1006px;top:64px;width:16px;height:638px;"></div>
<div class="a" style="left:1006px;top:64px;width:16px;height:16px;background:#D4D0C8;box-shadow:inset 1px 1px 0 #D4D0C8, inset -1px -1px 0 #404040, inset 2px 2px 0 #fff, inset -2px -2px 0 #808080;"></div>
<div class="a" style="left:1010px;top:70px;border-bottom:4px solid #000;border-left:4px solid transparent;border-right:4px solid transparent"></div>
<div class="a" style="left:1006px;top:686px;width:16px;height:16px;background:#D4D0C8;box-shadow:inset 1px 1px 0 #D4D0C8, inset -1px -1px 0 #404040, inset 2px 2px 0 #fff, inset -2px -2px 0 #808080;"></div>
<div class="a" style="left:1010px;top:692px;border-top:4px solid #000;border-left:4px solid transparent;border-right:4px solid transparent"></div>
<div class="a" style="left:1006px;top:383px;width:16px;height:13px;background:#D4D0C8;box-shadow:inset 1px 1px 0 #D4D0C8, inset -1px -1px 0 #404040, inset 2px 2px 0 #fff, inset -2px -2px 0 #808080;"></div>
<div class="a chk" style="left:136px;top:702px;width:870px;height:16px;"></div>
<div class="a" style="left:136px;top:702px;width:16px;height:16px;background:#D4D0C8;box-shadow:inset 1px 1px 0 #D4D0C8, inset -1px -1px 0 #404040, inset 2px 2px 0 #fff, inset -2px -2px 0 #808080;"></div>
<div class="a" style="left:141px;top:706px;border-right:4px solid #000;border-top:4px solid transparent;border-bottom:4px solid transparent"></div>
<div class="a" style="left:990px;top:702px;width:16px;height:16px;background:#D4D0C8;box-shadow:inset 1px 1px 0 #D4D0C8, inset -1px -1px 0 #404040, inset 2px 2px 0 #fff, inset -2px -2px 0 #808080;"></div>
<div class="a" style="left:996px;top:706px;border-left:4px solid #000;border-top:4px solid transparent;border-bottom:4px solid transparent"></div>
<div class="a" style="left:341px;top:702px;width:217px;height:16px;background:#D4D0C8;box-shadow:inset 1px 1px 0 #D4D0C8, inset -1px -1px 0 #404040, inset 2px 2px 0 #fff, inset -2px -2px 0 #808080;"></div>
<div class="a" style="left:1022px;top:62px;width:1px;height:658px;background:#D4D0C8;"></div>
<div class="a" style="left:1023px;top:62px;width:1px;height:658px;background:#fff;"></div>
<div class="a" style="left:0px;top:719px;width:1024px;height:1px;background:#fff;"></div>
<span class="t" style="left:2px;top:723.67px;font-size:11.5px;line-height:11.5px;color:#000;transform:scaleX(0.955);">Пиковая амплитуда на канале:1</span>
<div class="a" style="left:662px;top:722px;width:320px;height:16px;background:#D4D0C8;box-shadow:inset 1px 1px 0 #808080, inset -1px -1px 0 #fff;"></div>
<span class="t" style="left:663px;top:723.67px;font-size:11.5px;line-height:11.5px;color:#000;transform:scaleX(0.9749);">Полн. время: 00:00:00:935.280, Тек. время: 00:00:00:303.600</span>
<div class="a" style="left:984px;top:722px;width:39px;height:16px;background:#D4D0C8;box-shadow:inset 1px 1px 0 #808080, inset -1px -1px 0 #fff;"></div>
<span class="t" style="left:986px;top:723.67px;font-size:11.5px;line-height:11.5px;color:#000;transform:scaleX(0.8945);">5.01</span>
<div class="a" style="left:0px;top:739px;width:1024px;height:1px;background:#fff;"></div>
<div class="a" style="left:2px;top:742px;width:51px;height:22px;background:#D4D0C8;box-shadow:inset 1px 1px 0 #fff, inset -1px -1px 0 #404040, inset -2px -2px 0 #808080;"></div>
<svg style="left:5px;top:745px" width="16" height="16" viewBox="0 0 16 16"><path d="M2 2.500q3-1.500 5.500 0v5q-2.500-1.500-5.500 0z" fill="#E8402A"/><path d="M8.500 3q3 1.300 5.500 0v5q-2.500 1.300-5.500 0z" fill="#5CB82E"/><path d="M1.500 8.800q3-1.500 5.500 0v5q-2.500-1.500-5.500 0z" fill="#3B76E0"/><path d="M8 9.300q3 1.300 5.500 0v5q-2.500 1.300-5.500 0z" fill="#F5C518"/></svg>
<span class="t" style="left:22px;top:748.17px;font-size:11.5px;line-height:11.5px;color:#000;font-weight:bold;transform:scaleX(1.0183);">Пуск</span>
<div class="a" style="left:58px;top:742px;width:160px;height:22px;background:#D4D0C8;box-shadow:inset 1px 1px 0 #fff, inset -1px -1px 0 #404040, inset -2px -2px 0 #808080;"></div>
<svg style="left:63px;top:745px" width="18" height="17" viewBox="0 0 18 17"><ellipse cx="5" cy="12.500" rx="5" ry="3" fill="#9a9a9a" opacity="0.700"/><ellipse cx="8.800" cy="8.300" rx="4" ry="6.200" fill="none" stroke="#D81818" stroke-width="3"/></svg>
<span class="t" style="left:82.5px;top:748.17px;font-size:11.5px;line-height:11.5px;color:#000;transform:scaleX(0.9172);">ДИАГНОСТИКА ДВС ос...</span>
<div class="a" style="left:221px;top:742px;width:160px;height:22px;background:#D4D0C8;box-shadow:inset 1px 1px 0 #fff, inset -1px -1px 0 #404040, inset -2px -2px 0 #808080;"></div>
<svg style="left:226px;top:745px" width="16" height="17" viewBox="0 0 16 17"><path d="M1 3l5-2v14l-5 1z" fill="#E8C860"/><path d="M6 1l6 2v13l-6-1z" fill="#F8E8A0"/><path d="M12 3h1.500v12l-1.500 1z" fill="#C8A040"/><rect x="12.500" y="9" width="1.500" height="3" fill="#50A0D0"/></svg>
<span class="t" style="left:244.5px;top:748.17px;font-size:11.5px;line-height:11.5px;color:#000;transform:scaleX(0.9683);">зажигание</span>
<div class="a chk" style="left:384px;top:742px;width:160px;height:22px;box-shadow:inset 1px 1px 0 #404040, inset -1px -1px 0 #fff, inset 2px 2px 0 #808080;"></div>
<svg style="left:389px;top:746px" width="16" height="16" viewBox="0 0 16 16" shape-rendering="crispEdges"><rect x="0" y="0" width="16" height="16" fill="#D4D0C8"/><rect x="1" y="1" width="15" height="15" fill="#000"/><rect x="2" y="2" width="13" height="13" fill="#C0C0C0"/><rect x="2" y="2" width="12" height="12" fill="#008000"/><path d="M2 6h3v-1h-2zM3 5h1v-2h2v3h3v-1h1v-2h2v3h1v1h-2v-1h-1v1h-5v-1h-1v1h-1z" fill="#00FF00"/><path d="M2 13h11v-3h-1v2h-1v-3h-1v3h-1v-2h-1v2h-1v-3h-1v3h-1v-2h-1v2h-1z" fill="#00FF00"/></svg>
<span class="t" style="left:408.8px;top:749.17px;font-size:11.5px;line-height:11.5px;color:#000;font-weight:bold;transform:scaleX(0.9607);">USB Осциллограф - C...</span>
<div class="a" style="left:929px;top:746px;width:12px;height:16px;background:#0A246A;"></div>
<span class="t" style="left:930px;top:748.67px;font-size:11.5px;line-height:11.5px;color:#fff;transform:scaleX(0.7141);">RL</span>
<div class="a" style="left:945px;top:742px;width:77px;height:24px;background:#D4D0C8;box-shadow:inset 1px 1px 0 #808080, inset -1px -1px 0 #fff;"></div>
<span class="t" style="left:949.5px;top:747.00px;font-size:13px;line-height:13px;color:#000;font-weight:bold;transform:scaleX(1.35);">«</span>
<svg style="left:963px;top:746px" width="18" height="17" viewBox="0 0 18 17"><rect x="6" y="1" width="11" height="9" fill="#707070"/><rect x="7" y="2" width="9" height="7" fill="#8c8c8c"/><rect x="1" y="4" width="11" height="9" fill="#606060"/><rect x="2" y="5" width="9" height="7" fill="#a0a0a0"/><rect x="5" y="13" width="3" height="2" fill="#606060"/><rect x="3" y="15" width="7" height="1" fill="#505050"/><rect x="12" y="10" width="3" height="2" fill="#707070"/></svg>
<span class="t" style="left:986px;top:748.67px;font-size:11.5px;line-height:11.5px;color:#000;transform:scaleX(0.9391);">12:16</span>
</div></body></html>
